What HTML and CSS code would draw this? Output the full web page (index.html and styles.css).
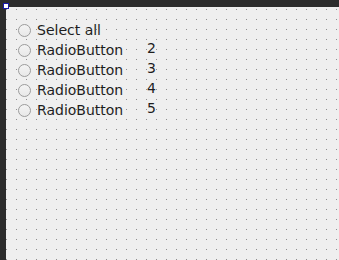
FILE: index.html
```html
<!DOCTYPE html>
<html>
<head>
<meta charset="utf-8">
<link rel="stylesheet" href="styles.css">
</head>
<body>
<div class="form">
  <div class="handle"></div>
  <div class="list">
    <div class="row"><span class="radio"></span><span class="label">Select all</span></div>
    <div class="row"><span class="radio"></span><span class="label">RadioButton</span><span class="num">2</span></div>
    <div class="row"><span class="radio"></span><span class="label">RadioButton</span><span class="num">3</span></div>
    <div class="row"><span class="radio"></span><span class="label">RadioButton</span><span class="num">4</span></div>
    <div class="row"><span class="radio"></span><span class="label">RadioButton</span><span class="num">5</span></div>
  </div>
</div>
</body>
</html>
```
FILE: styles.css
```css
html, body {
  margin: 0;
  padding: 0;
  width: 339px;
  height: 260px;
  overflow: hidden;
  background: #2d2d2d;
}
body {
  padding: 7px 0 0 6px;
  box-sizing: border-box;
  font-family: "DejaVu Sans", sans-serif;
  font-size: 14px;
  color: #1e1e1e;
}
.form {
  height: 253px;
  background-color: #efefef;
  background-image: radial-gradient(circle at 0.5px 2.5px, #8e8e8e 0.6px, rgba(0,0,0,0) 0.9px);
  background-size: 10px 10px;
  padding: 13px 0 0 12px;
  box-sizing: border-box;
}
.handle {
  position: absolute;
  left: 3px;
  top: 3px;
  width: 4px;
  height: 4px;
  border: 1px solid #1a1aa8;
  background: #ffffff;
}
.list {
  display: flex;
  flex-direction: column;
}
.row {
  display: flex;
  align-items: center;
  height: 20px;
}
.radio {
  width: 11px;
  height: 11px;
  border: 1px solid #9c9c9c;
  border-radius: 50%;
  background: linear-gradient(#f4f4f4, #e8e8e8);
  flex: none;
}
.label {
  margin-left: 6px;
  width: 110px;
}
.num {
  margin-top: -5px;
}
```
